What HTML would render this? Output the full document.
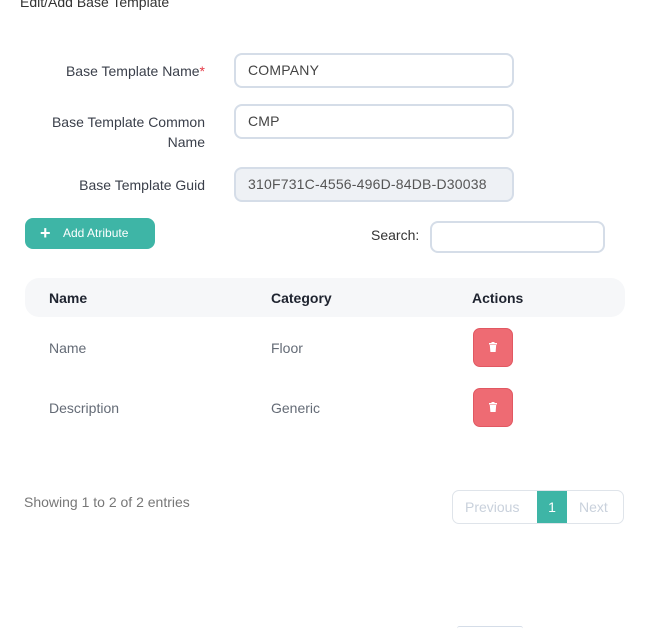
<!DOCTYPE html><html><head><style>
body{margin:0;width:654px;height:628px;overflow:hidden;background:#fff;font-family:"Liberation Sans",sans-serif;position:relative}
.a{position:absolute}
.lbl{color:#3a3f4a;font-size:14px;text-align:right;right:449px;width:200px}
.in{border:2px solid #d5dde8;border-radius:8px;left:234px;color:#444;font-size:14px;line-height:31px;padding-left:12px;box-sizing:border-box;width:280px;height:35px;letter-spacing:.2px}
.th{font-weight:bold;color:#1f2430;font-size:14px;top:290px}
.td{color:#646b76;font-size:14px}
.del{left:473px;width:40px;height:39px;background:#ee6b73;border-radius:7px;border:1px solid #e15862;box-sizing:border-box}
</style></head><body>
<div class="a" style="left:20px;top:-6px;font-size:14px;color:#333">Edit/Add Base Template</div>
<div class="a lbl" style="top:63px">Base Template Name<span style="color:#e53945">*</span></div>
<div class="a in" style="top:53px">COMPANY</div>
<div class="a lbl" style="top:112px;line-height:20px">Base Template Common<br>Name</div>
<div class="a in" style="top:104px">CMP</div>
<div class="a lbl" style="top:177px">Base Template Guid</div>
<div class="a in" style="top:167px;background:#eef1f5;color:#555">310F731C-4556-496D-84DB-D30038</div>
<div class="a" style="left:25px;top:218px;width:130px;height:31px;background:#3eb5a6;border-radius:8px;color:#fff;font-size:12px;line-height:31px"><span style="position:absolute;left:15px;font-size:18px;font-weight:bold">+</span><span style="position:absolute;left:38px">Add Atribute</span></div>
<div class="a" style="left:371px;top:227px;font-size:14px;color:#333">Search:</div>
<div class="a" style="left:430px;top:221px;width:175px;height:32px;border:2px solid #d5dde8;border-radius:8px;box-sizing:border-box"></div>
<div class="a" style="left:25px;top:278px;width:600px;height:39px;background:#f6f7f9;border-radius:14px"></div>
<div class="a th" style="left:49px">Name</div>
<div class="a th" style="left:271px">Category</div>
<div class="a th" style="left:472px">Actions</div>
<div class="a td" style="left:49px;top:340px">Name</div>
<div class="a td" style="left:271px;top:340px">Floor</div>
<div class="a del" style="top:328px"><svg width="38" height="37"><g fill="#fff"><rect x="15" y="14" width="8" height="1.5"/><rect x="17.5" y="13" width="3" height="1.5"/><path d="M15.8 16h6.4l-.6 7h-5.2z"/></g></svg></div>
<div class="a td" style="left:49px;top:400px">Description</div>
<div class="a td" style="left:271px;top:400px">Generic</div>
<div class="a del" style="top:388px"><svg width="38" height="37"><g fill="#fff"><rect x="15" y="14" width="8" height="1.5"/><rect x="17.5" y="13" width="3" height="1.5"/><path d="M15.8 16h6.4l-.6 7h-5.2z"/></g></svg></div>
<div class="a" style="left:24px;top:494px;font-size:14px;color:#777">Showing 1 to 2 of 2 entries</div>
<div class="a" style="left:452px;top:490px;width:172px;height:34px;border:1px solid #dfe4ea;border-radius:7px;box-sizing:border-box;overflow:hidden;font-size:14px;line-height:32px;color:#c9d1dc">
<span class="a" style="left:12px">Previous</span>
<span class="a" style="left:84px;width:30px;height:34px;top:-1px;background:#3eb5a6;color:#fff;text-align:center;line-height:34px">1</span>
<span class="a" style="left:126px">Next</span></div>
<div class="a" style="left:457px;top:626px;width:66px;height:4px;border-top:1px solid #d5dde8;border-radius:4px"></div>
</body></html>
